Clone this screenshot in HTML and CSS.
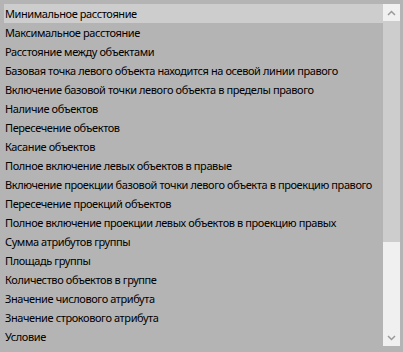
FILE: index.html
```
<!DOCTYPE html>
<html lang="ru">
<head>
    <meta charset="UTF-8">
    <title>Условия</title>
    <link rel="stylesheet" href="styles.css">
</head>
<body>
    <div class="listbox">
        <ul class="items">
            <li class="selected">Минимальное расстояние</li>
            <li>Максимальное расстояние</li>
            <li>Расстояние между объектами</li>
            <li>Базовая точка левого объекта находится на осевой линии правого</li>
            <li>Включение базовой точки левого объекта в пределы правого</li>
            <li>Наличие объектов</li>
            <li>Пересечение объектов</li>
            <li>Касание объектов</li>
            <li>Полное включение левых объектов в правые</li>
            <li>Включение проекции базовой точки левого объекта в проекцию правого</li>
            <li>Пересечение проекций объектов</li>
            <li>Полное включение проекции левых объектов в проекцию правых</li>
            <li>Сумма атрибутов группы</li>
            <li>Площадь группы</li>
            <li>Количество объектов в группе</li>
            <li>Значение числового атрибута</li>
            <li>Значение строкового атрибута</li>
            <li>Условие</li>
        </ul>
        <div class="scrollbar">
            <div class="arrow-button">
                <svg width="9" height="6" viewBox="0 0 9 6"><path d="M1 5 L4.5 1.5 L8 5" fill="none" stroke="#9a9a9a" stroke-width="1.5"/></svg>
            </div>
            <div class="thumb"></div>
            <div class="track">
                <div class="arrow-button">
                    <svg width="9" height="6" viewBox="0 0 9 6"><path d="M1 1 L4.5 4.5 L8 1" fill="none" stroke="#9a9a9a" stroke-width="1.5"/></svg>
                </div>
            </div>
        </div>
    </div>
</body>
</html>
```
FILE: styles.css
```
body {
    margin: 0;
    background-color: #b4b4b4;
    font-family: "Noto Sans", "DejaVu Sans", sans-serif;
    font-size: 11px;
    letter-spacing: -0.4px;
    color: #000;
}

.listbox {
    display: flex;
    padding: 4px 3px 6px 4px;
    height: 342px;
}

.items {
    flex: 1;
    list-style: none;
    margin: 0;
    padding: 0;
    overflow: hidden;
}

.items li {
    height: 19px;
    line-height: 19px;
    white-space: nowrap;
    padding-left: 1px;
}

.items li.selected {
    background-color: #cdcdcd;
}

.scrollbar {
    width: 17px;
    display: flex;
    flex-direction: column;
}

.arrow-button {
    height: 17px;
    background-color: #f0f0f0;
    display: flex;
    align-items: center;
    justify-content: center;
}

.thumb {
    height: 221px;
    background-color: #cdcdcd;
}

.track {
    flex: 1;
    background-color: #f0f0f0;
    display: flex;
    flex-direction: column;
    justify-content: flex-end;
}
```
